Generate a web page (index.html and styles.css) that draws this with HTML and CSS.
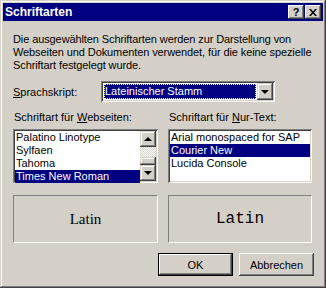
FILE: index.html
```html
<!DOCTYPE html>
<html lang="de">
<head>
  <meta charset="UTF-8">
  <title>Schriftarten</title>
  <link rel="stylesheet" href="styles.css">
</head>
<body>
  <div class="dialog">
    <div class="titlebar">
      <span class="title">Schriftarten</span>
      <div class="caption-buttons">
        <span class="cap-btn help">?</span>
        <span class="cap-btn close">
          <svg width="8" height="7" viewBox="0 0 8 7"><path d="M0 0h2l2 2.5L6 0h2L5 3.5 8 7H6L4 4.5 2 7H0l3-3.5z" fill="#000"/></svg>
        </span>
      </div>
    </div>

    <div class="content">
      <p class="intro">Die ausgewählten Schriftarten werden zur Darstellung von<br>Webseiten und Dokumenten verwendet, für die keine spezielle<br>Schriftart festgelegt wurde.</p>

      <div class="script-row">
        <label class="script-label"><u>S</u>prachskript:</label>
        <div class="combo">
          <div class="combo-value"><span>Lateinischer Stamm</span></div>
          <div class="combo-arrow"><span class="tri-down"></span></div>
        </div>
      </div>

      <div class="columns">
        <div class="col">
          <label>Schriftart für <u>W</u>ebseiten:</label>
          <div class="listbox">
            <ul class="items">
              <li>Palatino Linotype</li>
              <li>Sylfaen</li>
              <li>Tahoma</li>
              <li class="selected">Times New Roman</li>
            </ul>
            <div class="scrollbar">
              <div class="sb-btn"><span class="tri-up"></span></div>
              <div class="sb-track"><div class="sb-thumb"></div></div>
              <div class="sb-btn"><span class="tri-down"></span></div>
            </div>
          </div>
          <div class="preview serif">Latin</div>
        </div>
        <div class="col">
          <label>Schriftart für <u>N</u>ur-Text:</label>
          <div class="listbox">
            <ul class="items">
              <li>Arial monospaced for SAP</li>
              <li class="selected">Courier New</li>
              <li>Lucida Console</li>
            </ul>
          </div>
          <div class="preview mono">Latin</div>
        </div>
      </div>

      <div class="buttons">
        <button class="btn default">OK</button>
        <button class="btn">Abbrechen</button>
      </div>
    </div>
  </div>
</body>
</html>
```

FILE: styles.css
```css
* {
  box-sizing: border-box;
}

body {
  margin: 0;
  font-family: "Liberation Sans", Arial, sans-serif;
  font-size: 11px;
  color: #000;
}

u {
  text-decoration: underline;
}

.dialog {
  width: 326px;
  height: 288px;
  padding: 3px;
  background-color: #d4d0c8;
  box-shadow: inset -1px -1px #404040, inset 1px 1px #d4d0c8,
              inset -2px -2px #808080, inset 2px 2px #fff;
}

/* Title bar */
.titlebar {
  height: 18px;
  background-color: #000080;
  display: flex;
  align-items: center;
  justify-content: space-between;
  padding: 0 2px 0 2px;
}

.title {
  color: #fff;
  font-weight: bold;
  font-size: 12px;
}

.caption-buttons {
  display: flex;
  gap: 1px;
}

.cap-btn {
  width: 16px;
  height: 14px;
  background-color: #d4d0c8;
  display: flex;
  align-items: center;
  justify-content: center;
  font-weight: bold;
  font-size: 11px;
  line-height: 1;
  box-shadow: inset -1px -1px #404040, inset 1px 1px #fff,
              inset -2px -2px #808080, inset 2px 2px #d4d0c8;
}

/* Body */
.content {
  padding: 12px 9px 0 10px;
}

.intro {
  margin: 0;
  line-height: 13px;
  white-space: nowrap;
  letter-spacing: -0.1px;
}

.script-row {
  display: flex;
  align-items: center;
  margin-top: 9px;
}

.script-label {
  width: 88px;
}

.combo {
  width: 174px;
  height: 21px;
  display: flex;
  padding: 2px;
  background-color: #fff;
  box-shadow: inset 1px 1px #808080, inset -1px -1px #fff,
              inset 2px 2px #404040, inset -2px -2px #d4d0c8;
}

.combo-value {
  flex: 1;
  padding: 1px;
}

.combo-value span {
  display: block;
  height: 15px;
  line-height: 14px;
  padding-left: 1px;
  background-color: #000080;
  color: #fff;
  outline: 1px dotted #ffff80;
  outline-offset: -1px;
}

.combo-arrow,
.sb-btn {
  width: 16px;
  height: 17px;
  background-color: #d4d0c8;
  display: flex;
  align-items: center;
  justify-content: center;
  box-shadow: inset -1px -1px #404040, inset 1px 1px #d4d0c8,
              inset -2px -2px #808080, inset 2px 2px #fff;
}

.tri-down,
.tri-up {
  width: 0;
  height: 0;
  border-left: 4px solid transparent;
  border-right: 4px solid transparent;
}

.tri-down {
  border-top: 4px solid #000;
}

.tri-up {
  border-bottom: 4px solid #000;
}

/* Columns */
.columns {
  display: grid;
  grid-template-columns: 145px 144px;
  column-gap: 10px;
  margin-top: 9px;
}

.col label {
  display: block;
  margin-left: 1px;
  line-height: 13px;
}

.listbox {
  margin-top: 5px;
  height: 54px;
  display: flex;
  padding: 2px;
  background-color: #fff;
  box-shadow: inset 1px 1px #808080, inset -1px -1px #fff,
              inset 2px 2px #404040, inset -2px -2px #d4d0c8;
}

.items {
  list-style: none;
  margin: 0;
  padding: 0;
  flex: 1;
}

.items li {
  height: 13px;
  line-height: 13px;
  padding-left: 1px;
  white-space: nowrap;
}

.items li.selected {
  background-color: #000080;
  color: #fff;
}

.scrollbar {
  width: 16px;
  display: flex;
  flex-direction: column;
}

.scrollbar .sb-btn {
  height: 16px;
}

.sb-track {
  flex: 1;
  display: flex;
  flex-direction: column;
  justify-content: flex-end;
  background-color: #fff;
  background-image: repeating-conic-gradient(#d4d0c8 0 25%, #fff 0 50%);
  background-size: 2px 2px;
}

.sb-thumb {
  height: 8px;
  background-color: #d4d0c8;
  box-shadow: inset -1px -1px #404040, inset 1px 1px #d4d0c8,
              inset -2px -2px #808080, inset 2px 2px #fff;
}

.preview {
  margin-top: 12px;
  height: 48px;
  display: flex;
  align-items: center;
  justify-content: center;
  border-top: 1px solid #808080;
  border-left: 1px solid #808080;
  border-bottom: 1px solid #fff;
  border-right: 1px solid #fff;
}

.preview.serif {
  font-family: "Liberation Serif", "Times New Roman", serif;
  font-size: 15px;
}

.preview.mono {
  font-family: "Liberation Mono", "Courier New", monospace;
  font-size: 16px;
}

/* Buttons */
.buttons {
  display: flex;
  justify-content: flex-end;
  gap: 6px;
  margin-top: 10px;
}

.btn {
  width: 75px;
  height: 23px;
  font-family: inherit;
  font-size: 11px;
  background-color: #d4d0c8;
  border: none;
  padding: 0;
  box-shadow: inset -1px -1px #404040, inset 1px 1px #fff,
              inset -2px -2px #808080, inset 2px 2px #d4d0c8;
}

.btn.default {
  box-shadow: inset 0 0 0 1px #000, inset -2px -2px #404040,
              inset 2px 2px #fff, inset -3px -3px #808080;
}
```
